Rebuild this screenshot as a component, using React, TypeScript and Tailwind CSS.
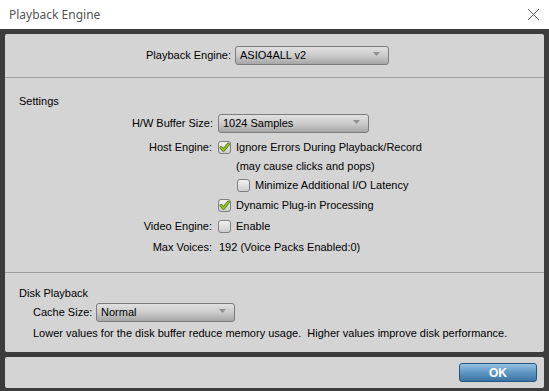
import React from 'react';

const font = { fontFamily: '"Liberation Sans", Arial, sans-serif' };

function Select({ value, width }: { value: string; width: string }) {
  return (
    <div
      className={`${width} relative h-[19px] rounded-[3px] border border-[#7c7c7c] bg-gradient-to-b from-[#e0e0e0] via-[#cbcbcb] to-[#a6a6a6] flex items-center pl-[4px] text-[11px] text-black`}
    >
      <span>{value}</span>
      <svg className="absolute right-[8px] top-[5px]" width="7" height="4" viewBox="0 0 7 4">
        <path d="M0 0 L7 0 L3.5 4 Z" fill="#8f8f8f" />
      </svg>
    </div>
  );
}

function Checkbox({ checked }: { checked?: boolean }) {
  return (
    <div className="w-[13px] h-[13px] rounded-[3px] border border-[#7e7e7e] bg-gradient-to-b from-[#f2f2f2] to-[#cdcdcd] flex items-center justify-center shrink-0">
      {checked && (
        <svg width="11" height="11" viewBox="0 0 11 11">
          <path d="M2 5.5 L4.5 8.2 L9.3 2.2" fill="none" stroke="#4f6b0c" strokeWidth="3" strokeLinecap="round" strokeLinejoin="round" />
          <path d="M2 5.5 L4.5 8.2 L9.3 2.2" fill="none" stroke="#98c823" strokeWidth="1.8" strokeLinecap="round" strokeLinejoin="round" />
        </svg>
      )}
    </div>
  );
}

function Row({ label, children, h }: { label?: string; children: React.ReactNode; h: string }) {
  return (
    <div className={`flex items-center ${h}`}>
      <div className="w-[208px] text-right pr-[1px]">{label}</div>
      <div className="ml-[5px] flex items-center">{children}</div>
    </div>
  );
}

export default function App() {
  return (
    <div className="w-[549px] h-[391px] bg-white flex flex-col overflow-hidden text-[11px] text-black" style={font}>
      {/* Title bar */}
      <div className="h-[29px] flex items-center justify-between pl-[9px] pr-[9px] shrink-0">
        <span className="text-[12px] text-[#555555]" style={{ fontFamily: '"Noto Sans", sans-serif' }}>
          Playback Engine
        </span>
        <svg width="13" height="13" viewBox="0 0 13 13">
          <path d="M1 1 L12 12 M12 1 L1 12" stroke="#5a5a5a" strokeWidth="1" />
        </svg>
      </div>

      <div className="flex-1 bg-[#3c3c3c] pt-[5px] px-[5px] pb-[3px] flex flex-col gap-[5px]">
        {/* Main panel */}
        <div className="h-[318px] bg-[#d4d4d4] rounded-[2px] flex flex-col">
          <div className="h-[43px] flex items-center pl-[141px] gap-[4px]">
            <span>Playback Engine:</span>
            <Select value="ASIO4ALL v2" width="w-[154px]" />
          </div>
          <div className="border-t border-[#9e9e9e]" />

          {/* Settings */}
          <div className="h-[194px] flex flex-col">
            <div className="pt-[16px] pl-[14px] leading-[14px]">Settings</div>
            <div className="mt-[6px] flex items-center h-[19px]">
              <div className="w-[208px] text-right">H/W Buffer Size:</div>
              <div className="ml-[5px]">
                <Select value="1024 Samples" width="w-[151px]" />
              </div>
            </div>
            <div className="mt-[5px]">
              <Row label="Host Engine:" h="h-[19px]">
                <Checkbox checked />
                <span className="ml-[5px]">Ignore Errors During Playback/Record</span>
              </Row>
              <Row h="h-[19px]">
                <span className="ml-[18px]">(may cause clicks and pops)</span>
              </Row>
              <Row h="h-[19px]">
                <div className="ml-[19px] flex items-center">
                  <Checkbox />
                  <span className="ml-[5px]">Minimize Additional I/O Latency</span>
                </div>
              </Row>
              <Row h="h-[20px]">
                <Checkbox checked />
                <span className="ml-[5px]">Dynamic Plug-in Processing</span>
              </Row>
              <Row label="Video Engine:" h="h-[22px]">
                <Checkbox />
                <span className="ml-[5px]">Enable</span>
              </Row>
              <Row label="Max Voices:" h="h-[20px]">
                <span className="ml-[1px]">192 (Voice Packs Enabled:0)</span>
              </Row>
            </div>
          </div>
          <div className="border-t border-[#9e9e9e]" />

          {/* Disk Playback */}
          <div className="flex flex-col">
            <div className="pt-[13px] pl-[14px] leading-[14px]">Disk Playback</div>
            <div className="mt-[3px] pl-[28px] flex items-center h-[19px]">
              <span className="w-[63px]">Cache Size:</span>
              <Select value="Normal" width="w-[139px]" />
            </div>
            <div className="mt-[4px] pl-[28px] leading-[14px] whitespace-pre">
              Lower values for the disk buffer reduce memory usage.  Higher values improve disk performance.
            </div>
          </div>
        </div>

        {/* Bottom panel */}
        <div className="h-[31px] bg-[#d4d4d4] rounded-[2px] flex items-center justify-end pr-[7px]">
          <button className="w-[78px] h-[19px] rounded-[3px] border border-[#24557e] bg-gradient-to-b from-[#93c1e3] via-[#5f97c4] to-[#3a72a2] text-white font-bold text-[12px] leading-none">
            OK
          </button>
        </div>
      </div>
    </div>
  );
}
